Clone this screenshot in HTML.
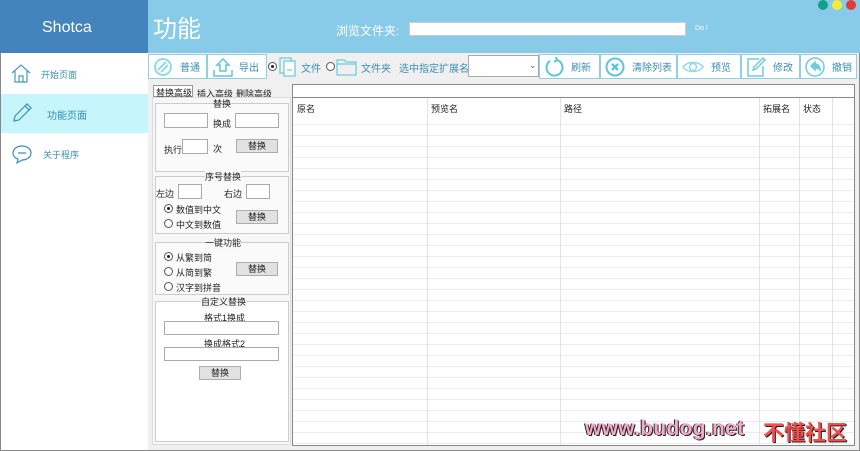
<!DOCTYPE html>
<html><head><meta charset="utf-8"><style>
*{box-sizing:border-box;margin:0;padding:0}
body{width:860px;height:451px;overflow:hidden;background:#fff;font-family:"Liberation Sans","Noto Sans CJK SC",sans-serif;font-size:9px;color:#333;position:relative}
.a{position:absolute}
.btn{position:absolute;top:54px;height:25px;border:1px solid #8fd0e6;background:#fff;color:#3a8fb0;font-size:10px;display:flex;align-items:center}
.btn span{position:absolute}
.inp{position:absolute;background:#fff;border:1px solid #aaa}
.gb{position:absolute;background:#e9e9e9;border:1px solid #ccc}
.b{position:absolute;background:#e1e1e1;border:1px solid #adadad;font-size:9px;text-align:center;line-height:13px;color:#222}
.t{position:absolute;font-size:9px;color:#222;white-space:nowrap}
.rad{position:absolute;width:9px;height:9px;border:1px solid #555;border-radius:50%;background:#fff}
.rad.on::after{content:"";position:absolute;left:2px;top:2px;width:3px;height:3px;background:#222;border-radius:50%}
</style></head><body>
<div class="a" style="left:0;top:0;width:148px;height:53px;background:#4284bb"></div>
<div class="a" style="left:148px;top:0;width:712px;height:53px;background:#87cbe8"></div>
<div class="a" style="left:42px;top:19px;font-size:16px;color:#fff;">Shotca</div>
<div class="a" style="left:153px;top:9px;font-size:24px;color:#fff;">功能</div>
<div class="a" style="left:336px;top:22px;font-size:12px;color:#fff;">浏览文件夹:</div>
<div class="a" style="left:409px;top:22px;width:277px;height:14px;background:#fff;border:1px solid #ccc"></div>
<div class="a" style="left:695px;top:25px;font-size:7px;color:#fff;">Do !</div>
<div class="a" style="left:818px;top:0px;width:10px;height:10px;border-radius:50%;background:#12a08a"></div>
<div class="a" style="left:832px;top:0px;width:10px;height:10px;border-radius:50%;background:#f4ec3c"></div>
<div class="a" style="left:846px;top:0px;width:10px;height:10px;border-radius:50%;background:#e33a3a"></div>
<div class="a" style="left:0;top:53px;width:148px;height:398px;background:#fff;border-left:1px solid #888;border-bottom:1px solid #888"></div>
<div class="a" style="left:1px;top:94px;width:147px;height:39px;background:#c6f6fb"></div>
<svg class="a" style="left:10px;top:62px" width="22" height="22" viewBox="0 0 22 22" fill="none" stroke="#4a9ab8" stroke-width="1.2"><path d="M2 11 L11 3 L20 11 M5 9 V20 H17 V9 M9 20 V14 H13 V20"/></svg>
<div class="t" style="left:41px;top:68px;color:#3a8fb0">开始页面</div>
<svg class="a" style="left:11px;top:102px" width="22" height="22" viewBox="0 0 22 22" fill="none" stroke="#3a8fb0" stroke-width="1.2"><path d="M3 19 L4 14 L16 2 L20 6 L8 18 Z M14 4 L18 8"/></svg>
<div class="t" style="left:47px;top:107px;color:#3a8fb0;font-size:10px">功能页面</div>
<svg class="a" style="left:11px;top:143px" width="22" height="22" viewBox="0 0 22 22" fill="none" stroke="#3a8fb0" stroke-width="1.2"><path d="M11 3 C16 3 20 6 20 10 C20 14 16 17 11 17 L6 20 L7 16 C4 15 2 13 2 10 C2 6 6 3 11 3 Z M7 10 H15"/></svg>
<div class="t" style="left:43px;top:148px;color:#3a8fb0">关于程序</div>
<div class="a" style="left:148px;top:53px;width:712px;height:398px;background:#f0f0f0;border-right:1px solid #888;border-bottom:1px solid #888"></div>
<div class="btn" style="left:148px;width:59px"><svg style="position:absolute;left:3px" width="22" height="22" viewBox="0 0 22 22" fill="none" stroke="#8fdce8" stroke-width="2"><circle cx="11" cy="11" r="8"/><path d="M6 14 L14 6 M9 16 L16 9"/></svg><span style="left:31px">普通</span></div>
<div class="btn" style="left:207px;width:60px"><svg style="position:absolute;left:4px" width="22" height="22" viewBox="0 0 22 22" fill="none" stroke="#5cc6dd" stroke-width="1.5"><path d="M11 3 L5 9 H8 V15 H14 V9 H17 Z M2 14 V20 H20 V14"/></svg><span style="left:31px">导出</span></div>
<div class="rad on" style="left:268px;top:62px"></div>
<svg class="a" style="left:278px;top:56px" width="20" height="22" viewBox="0 0 20 22" fill="none" stroke="#6fcbe0" stroke-width="1.3"><rect x="2" y="2" width="11" height="15"/><rect x="6" y="5" width="11" height="15" fill="#fff"/><path d="M9 14 H14"/></svg>
<div class="t" style="left:301px;top:60px;color:#3a8fb0;font-size:10px">文件</div>
<div class="rad" style="left:326px;top:62px"></div>
<svg class="a" style="left:336px;top:57px" width="22" height="20" viewBox="0 0 22 20" fill="none" stroke="#6fcbe0" stroke-width="1.3"><path d="M1 3 H8 L10 5 H20 V18 H1 Z M1 7 H20"/></svg>
<div class="t" style="left:361px;top:60px;color:#3a8fb0;font-size:10px">文件夹</div>
<div class="t" style="left:399px;top:60px;color:#3a8fb0;font-size:10px">选中指定扩展名</div>
<div class="a" style="left:468px;top:55px;width:71px;height:22px;background:#fff;border:1px solid #aaa"></div>
<div class="t" style="left:529px;top:60px;color:#666">⌄</div>
<div class="btn" style="left:539px;width:61px"><svg style="position:absolute;left:3px" width="22" height="22" viewBox="0 0 22 22" fill="none" stroke="#5cc6dd" stroke-width="2"><path d="M7 5 A8 8 0 1 0 14 4 M13 1 L14 4 L11 6"/></svg><span style="left:31px">刷新</span></div>
<div class="btn" style="left:600px;width:77px"><svg style="position:absolute;left:3px" width="22" height="22" viewBox="0 0 22 22" fill="none" stroke="#5cc6dd" stroke-width="2"><circle cx="11" cy="11" r="8.5"/><path d="M8 8 L14 14 M14 8 L8 14" stroke-width="2.5"/></svg><span style="left:31px">清除列表</span></div>
<div class="btn" style="left:677px;width:64px"><svg style="position:absolute;left:3px" width="24" height="22" viewBox="0 0 24 22" fill="none" stroke="#8fdce8" stroke-width="1.5"><path d="M2 11 C6 5 18 5 22 11 C18 17 6 17 2 11 Z"/><circle cx="12" cy="11" r="3.5"/></svg><span style="left:33px">预览</span></div>
<div class="btn" style="left:741px;width:59px"><svg style="position:absolute;left:3px" width="22" height="22" viewBox="0 0 22 22" fill="none" stroke="#6fcbe0" stroke-width="1.5"><path d="M14 3 H3 V20 H18 V10 M8 14 L9 11 L18 2 L20 4 L11 13 Z"/></svg><span style="left:31px">修改</span></div>
<div class="btn" style="left:800px;width:57px"><svg style="position:absolute;left:3px" width="22" height="22" viewBox="0 0 22 22" fill="none" stroke="#6fcbe0" stroke-width="1.5"><circle cx="11" cy="11" r="9"/><path d="M7 10 L11 6 V8 C14 8 16 10 16 14 C14 12 13 12 11 12 V14 Z" fill="#6fcbe0"/></svg><span style="left:31px">撤销</span></div>
<div class="a" style="left:153px;top:85px;width:40px;height:12px;border:1px solid #999;background:#fff"></div>
<div class="t" style="left:156px;top:86px">替换高级</div>
<div class="t" style="left:197px;top:87px">插入高级</div>
<div class="t" style="left:236px;top:87px">删除高级</div>
<div class="a" style="left:152px;top:97px;width:139px;height:348px;background:#f7f7f7;border:1px solid #ddd"></div>
<div class="gb" style="left:155px;top:103px;width:134px;height:69px;background:#fafafa"></div>
<div class="t" style="left:213px;top:97px">替换</div>
<div class="inp" style="left:164px;top:113px;width:44px;height:15px"></div>
<div class="t" style="left:213px;top:117px">换成</div>
<div class="inp" style="left:235px;top:113px;width:44px;height:15px"></div>
<div class="t" style="left:164px;top:143px">执行</div>
<div class="inp" style="left:182px;top:139px;width:26px;height:15px"></div>
<div class="t" style="left:213px;top:142px">次</div>
<div class="b" style="left:236px;top:139px;width:42px;height:14px">替换</div>
<div class="gb" style="left:155px;top:176px;width:134px;height:58px;background:#fafafa"></div>
<div class="t" style="left:205px;top:170px;background:#f7f7f7">序号替换</div>
<div class="t" style="left:156px;top:187px">左边</div>
<div class="inp" style="left:178px;top:184px;width:24px;height:15px"></div>
<div class="t" style="left:224px;top:187px">右边</div>
<div class="inp" style="left:246px;top:184px;width:24px;height:15px"></div>
<div class="rad on" style="left:164px;top:204px"></div>
<div class="t" style="left:176px;top:203px">数值到中文</div>
<div class="rad" style="left:164px;top:219px"></div>
<div class="t" style="left:176px;top:218px">中文到数值</div>
<div class="b" style="left:236px;top:210px;width:42px;height:14px">替换</div>
<div class="gb" style="left:155px;top:242px;width:134px;height:53px;background:#fafafa"></div>
<div class="t" style="left:205px;top:236px;background:#f7f7f7">一键功能</div>
<div class="rad on" style="left:164px;top:252px"></div>
<div class="t" style="left:176px;top:251px">从繁到简</div>
<div class="rad" style="left:164px;top:267px"></div>
<div class="t" style="left:176px;top:266px">从简到繁</div>
<div class="rad" style="left:164px;top:282px"></div>
<div class="t" style="left:176px;top:281px">汉字到拼音</div>
<div class="b" style="left:236px;top:262px;width:42px;height:14px">替换</div>
<div class="gb" style="left:155px;top:301px;width:134px;height:141px;background:#fff"></div>
<div class="t" style="left:201px;top:295px;background:#f7f7f7">自定义替换</div>
<div class="t" style="left:204px;top:311px">格式1换成</div>
<div class="inp" style="left:164px;top:321px;width:115px;height:14px"></div>
<div class="t" style="left:204px;top:337px">换成格式2</div>
<div class="inp" style="left:164px;top:347px;width:115px;height:14px"></div>
<div class="b" style="left:199px;top:366px;width:42px;height:14px">替换</div>
<div class="a" style="left:292px;top:84px;width:563px;height:14px;background:#fff;border:1px solid #888"></div>
<div class="a" style="left:292px;top:98px;width:563px;height:348px;border:1px solid #888;border-top:none;background:#fff repeating-linear-gradient(to bottom,transparent 0,transparent 10px,#ececec 10px,#ececec 11px);background-position:0 16px"></div>
<div class="a" style="left:293px;top:98px;width:561px;height:16px;background:#fff"></div>
<div class="a" style="left:427px;top:98px;width:1px;height:347px;background:#e4e4e4"></div>
<div class="a" style="left:560px;top:98px;width:1px;height:347px;background:#e4e4e4"></div>
<div class="a" style="left:759px;top:98px;width:1px;height:347px;background:#e4e4e4"></div>
<div class="a" style="left:799px;top:98px;width:1px;height:347px;background:#e4e4e4"></div>
<div class="a" style="left:832px;top:98px;width:1px;height:347px;background:#e4e4e4"></div>
<div class="t" style="left:297px;top:102px">原名</div>
<div class="t" style="left:431px;top:102px">预览名</div>
<div class="t" style="left:564px;top:102px">路径</div>
<div class="t" style="left:763px;top:102px">拓展名</div>
<div class="t" style="left:803px;top:102px">状态</div>
<div class="a" style="left:585px;top:417px;font-size:21px;font-weight:bold;letter-spacing:0.3px;color:#f6a9c9;text-shadow:1px 1px 0 #222,-1px 0 0 #222;font-family:'Liberation Sans',sans-serif">www.budog.net</div>
<div class="a" style="left:763px;top:417px;font-size:21px;font-weight:bold;color:#f05050;text-shadow:1px 1px 0 #222;font-family:'Liberation Sans','Noto Sans CJK SC',sans-serif">不懂社区</div>
</body></html>
